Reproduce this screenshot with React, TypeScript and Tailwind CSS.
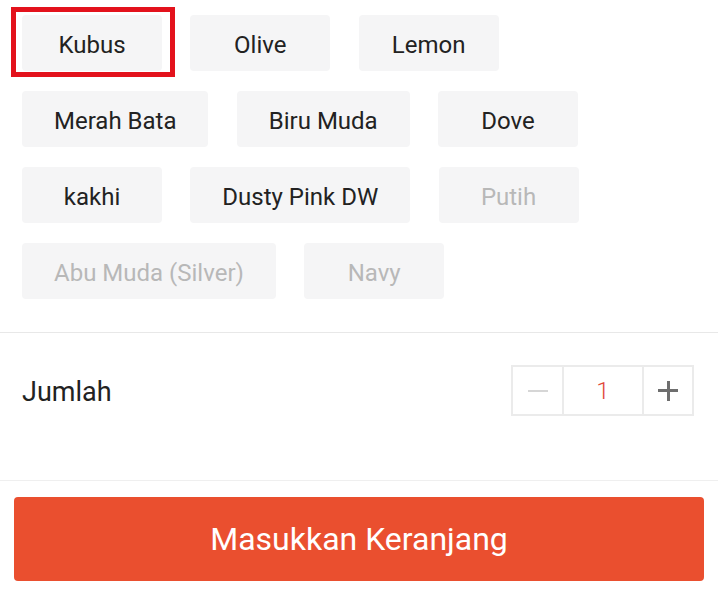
import React from "react";

type Opt = { label: string; disabled?: boolean; selected?: boolean };

const options: Opt[][] = [
  [{ label: "Kubus", selected: true }, { label: "Olive" }, { label: "Lemon" }],
  [{ label: "Merah Bata" }, { label: "Biru Muda" }, { label: "Dove" }],
  [{ label: "kakhi" }, { label: "Dusty Pink DW" }, { label: "Putih", disabled: true }],
  [{ label: "Abu Muda (Silver)", disabled: true }, { label: "Navy", disabled: true }],
];

function Chip({ o }: { o: Opt }) {
  return (
    <div className="relative">
      <div
        className={
          "h-[56px] min-w-[140px] px-[32px] pt-[3px] flex items-center justify-center rounded-[4px] bg-[#f5f5f6] text-[24px] " +
          (o.disabled ? "text-[#b8b8b8]" : "text-[#222222]")
        }
      >
        {o.label}
      </div>
      {o.selected && (
        <div className="absolute left-[-11px] right-[-13px] top-[-8px] bottom-[-6px] border-[5px] border-[#e3121c]" />
      )}
    </div>
  );
}

export default function App() {
  return (
    <div
      className="w-[718px] h-[596px] bg-white overflow-hidden flex flex-col"
      style={{ fontFamily: "Roboto, 'Noto Sans', sans-serif" }}
    >
      <div className="px-[22px] pt-[15px] pb-[33px] flex flex-col gap-[20px]">
        {options.map((row, i) => (
          <div key={i} className="flex gap-[28.3px]">
            {row.map((o) => (
              <Chip key={o.label} o={o} />
            ))}
          </div>
        ))}
      </div>
      <div className="border-t border-[#e8e8e8] h-[148px] flex items-start justify-between pl-[22px] pr-[24px] pt-[32px]">
        <span className="text-[27px] leading-[51px] text-[#222222] mt-[2px]">Jumlah</span>
        <div className="flex h-[51px] border-2 border-[#ebebeb]">
          <div className="w-[49px] flex items-center justify-center">
            <div className="w-[20px] h-[2px] bg-[#d6d6d6]" />
          </div>
          <div className="w-[82px] border-x-2 border-[#ebebeb] flex items-center justify-center text-[24px] font-light text-[#e0483a]">
            1
          </div>
          <div className="w-[48px] flex items-center justify-center">
            <div className="relative w-[20px] h-[20px]">
              <div className="absolute left-0 right-0 top-[8.5px] h-[3px] bg-[#6e6e6e]" />
              <div className="absolute top-0 bottom-0 left-[8.5px] w-[3px] bg-[#6e6e6e]" />
            </div>
          </div>
        </div>
      </div>
      <div className="border-t border-[#efefef] px-[14px] pt-[16px]">
        <div className="h-[84px] rounded-[4px] bg-[#ea4f2f] flex items-center justify-center text-white text-[32px]">
          Masukkan Keranjang
        </div>
      </div>
    </div>
  );
}
